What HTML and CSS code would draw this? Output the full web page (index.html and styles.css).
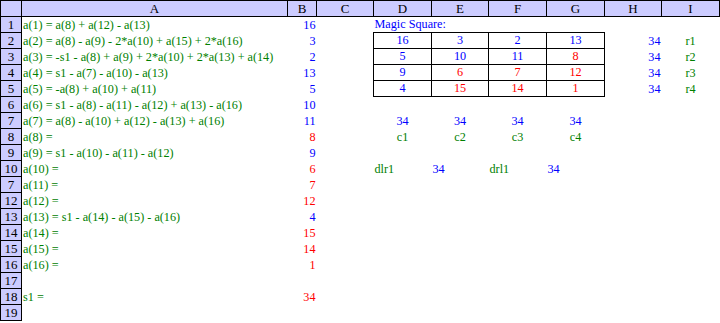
FILE: index.html
```html
<!DOCTYPE html>
<html>
<head>
<meta charset="utf-8">
<link rel="stylesheet" href="styles.css">
</head>
<body>
<table class="sheet">
<colgroup>
<col class="w-rh"><col class="w-a"><col class="w-b"><col class="w-c"><col class="w-d"><col class="w-e"><col class="w-f"><col class="w-g"><col class="w-h"><col class="w-i">
</colgroup>
<tr class="hdr"><th class="corner"></th><th>A</th><th>B</th><th>C</th><th>D</th><th>E</th><th>F</th><th>G</th><th>H</th><th>I</th></tr>
<tr><th>1</th><td class="f">a(1) = a(8) + a(12) - a(13)</td><td class="n bl">16</td><td></td><td class="ms" colspan="2">Magic Square:</td><td></td><td></td><td></td><td></td></tr>
<tr><th>2</th><td class="f">a(2) = a(8) - a(9) - 2*a(10) + a(15) + 2*a(16)</td><td class="n bl">3</td><td></td><td class="sq bl">16</td><td class="sq bl">3</td><td class="sq bl">2</td><td class="sq bl">13</td><td class="n bl">34</td><td class="c f">r1</td></tr>
<tr><th>3</th><td class="f">a(3) = -s1 - a(8) + a(9) + 2*a(10) + 2*a(13) + a(14)</td><td class="n bl">2</td><td></td><td class="sq bl">5</td><td class="sq bl">10</td><td class="sq bl">11</td><td class="sq rd">8</td><td class="n bl">34</td><td class="c f">r2</td></tr>
<tr><th>4</th><td class="f">a(4) = s1 - a(7) - a(10) - a(13)</td><td class="n bl">13</td><td></td><td class="sq bl">9</td><td class="sq rd">6</td><td class="sq rd">7</td><td class="sq rd">12</td><td class="n bl">34</td><td class="c f">r3</td></tr>
<tr><th>5</th><td class="f">a(5) = -a(8) + a(10) + a(11)</td><td class="n bl">5</td><td></td><td class="sq bl">4</td><td class="sq rd">15</td><td class="sq rd">14</td><td class="sq rd">1</td><td class="n bl">34</td><td class="c f">r4</td></tr>
<tr><th>6</th><td class="f">a(6) = s1 - a(8) - a(11) - a(12) + a(13) - a(16)</td><td class="n bl">10</td><td></td><td></td><td></td><td></td><td></td><td></td><td></td></tr>
<tr><th>7</th><td class="f">a(7) = a(8) - a(10) + a(12) - a(13) + a(16)</td><td class="n bl">11</td><td></td><td class="c bl">34</td><td class="c bl">34</td><td class="c bl">34</td><td class="c bl">34</td><td></td><td></td></tr>
<tr><th>8</th><td class="f">a(8) =</td><td class="n rd">8</td><td></td><td class="c f">c1</td><td class="c f">c2</td><td class="c f">c3</td><td class="c f">c4</td><td></td><td></td></tr>
<tr><th>9</th><td class="f">a(9) = s1 - a(10) - a(11) - a(12)</td><td class="n bl">9</td><td></td><td></td><td></td><td></td><td></td><td></td><td></td></tr>
<tr><th>10</th><td class="f">a(10) =</td><td class="n rd">6</td><td></td><td class="f">dlr1</td><td class="bl">34</td><td class="f">drl1</td><td class="bl">34</td><td></td><td></td></tr>
<tr><th>7</th><td class="f">a(11) =</td><td class="n rd">7</td><td></td><td></td><td></td><td></td><td></td><td></td><td></td></tr>
<tr><th>12</th><td class="f">a(12) =</td><td class="n rd">12</td><td></td><td></td><td></td><td></td><td></td><td></td><td></td></tr>
<tr><th>13</th><td class="f">a(13) = s1 - a(14) - a(15) - a(16)</td><td class="n bl">4</td><td></td><td></td><td></td><td></td><td></td><td></td><td></td></tr>
<tr><th>14</th><td class="f">a(14) =</td><td class="n rd">15</td><td></td><td></td><td></td><td></td><td></td><td></td><td></td></tr>
<tr><th>15</th><td class="f">a(15) =</td><td class="n rd">14</td><td></td><td></td><td></td><td></td><td></td><td></td><td></td></tr>
<tr><th>16</th><td class="f">a(16) =</td><td class="n rd">1</td><td></td><td></td><td></td><td></td><td></td><td></td><td></td></tr>
<tr><th>17</th><td></td><td></td><td></td><td></td><td></td><td></td><td></td><td></td><td></td></tr>
<tr><th>18</th><td class="f">s1 =</td><td class="n rd">34</td><td></td><td></td><td></td><td></td><td></td><td></td><td></td></tr>
<tr><th>19</th><td></td><td></td><td></td><td></td><td></td><td></td><td></td><td></td><td></td></tr>
</table>
</body>
</html>
```
FILE: styles.css
```css
html, body {
  margin: 0;
  padding: 0;
  background: #ffffff;
  font-family: "Liberation Serif", "Times New Roman", serif;
}
.sheet {
  border-collapse: collapse;
  table-layout: fixed;
  width: 720px;
  font-family: "Liberation Serif", "Times New Roman", serif;
  font-size: 12.2px;
}
.w-rh { width: 21px; }
.w-a { width: 266px; }
.w-b { width: 29px; }
.w-c { width: 57px; }
.w-d { width: 58px; }
.w-e { width: 57px; }
.w-f { width: 58px; }
.w-g { width: 58px; }
.w-h { width: 57px; }
.w-i { width: 58px; }
.sheet tr { height: 16px; }
.sheet th {
  background: #ccccff;
  border: 1px solid #000000;
  font-weight: normal;
  font-size: 13px;
  color: #000000;
  text-align: center;
  padding: 0;
  height: 15px;
  line-height: 15px;
  overflow: hidden;
  white-space: nowrap;
}
.sheet td {
  padding: 0 1px;
  height: 15px;
  line-height: 15px;
  vertical-align: bottom;
  white-space: nowrap;
  overflow: visible;
}
.f { color: #008000; }
.bl { color: #0000ff; }
.rd { color: #ff0000; }
.n { text-align: right; }
.c { text-align: center; }
.ms { color: #0000ff; }
.sq {
  border: 1px solid #000000;
  text-align: center;
}
```
